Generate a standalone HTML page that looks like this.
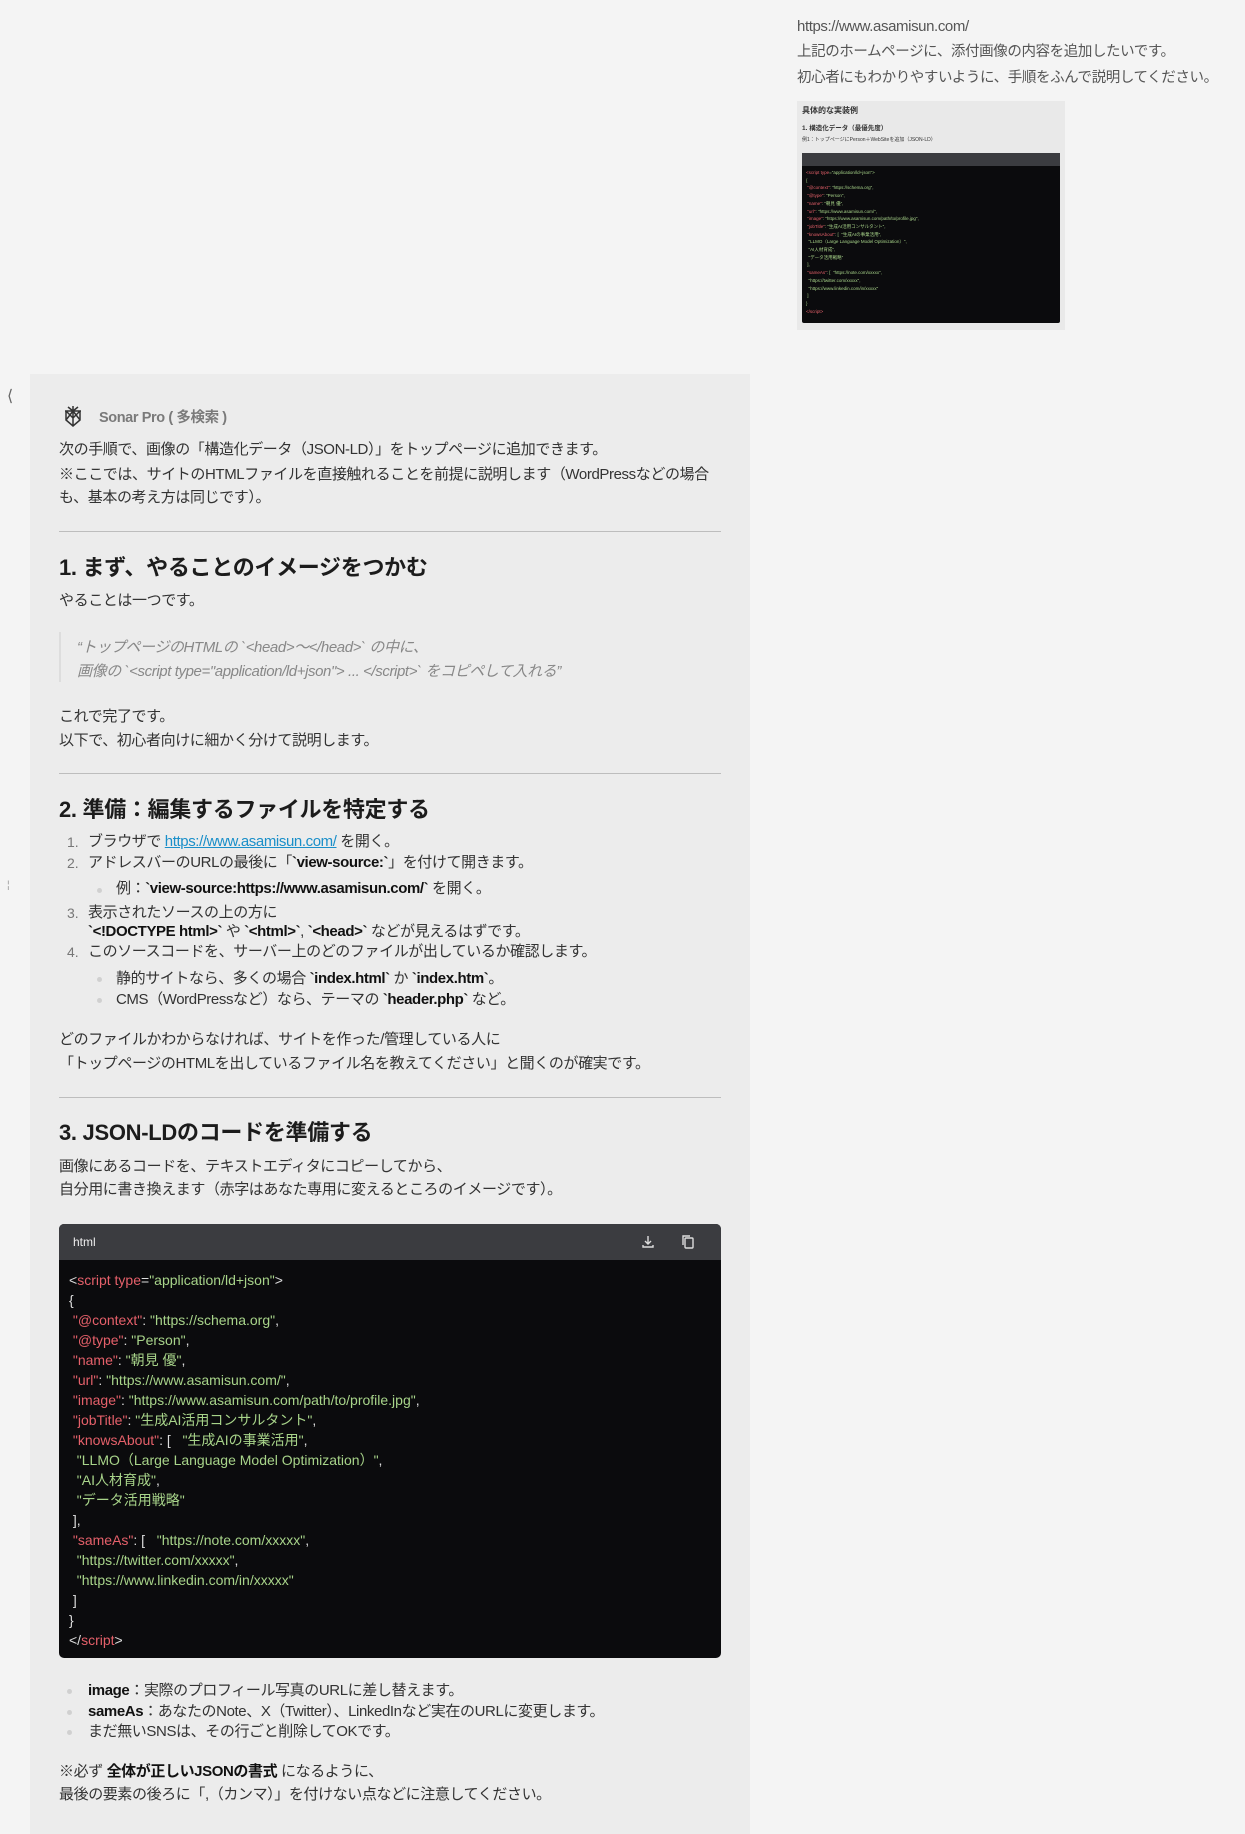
<!DOCTYPE html>
<html><head><meta charset="utf-8"><style>
html,body{margin:0;padding:0;}
body{width:1245px;height:1821px;background:#f4f4f4;position:relative;overflow:hidden;font-family:"Liberation Sans","Noto Sans CJK JP",sans-serif;color:#333;}
.l{position:absolute;white-space:nowrap;font-size:15px;line-height:24px;left:59px;letter-spacing:-0.4px;}
.panel{position:absolute;left:30px;top:374px;width:720px;height:1460px;background:#ececec;}
.hr{position:absolute;left:59px;width:662px;height:1px;background:#bdbdbd;}
h2{position:absolute;margin:0;left:59px;font-size:22px;line-height:30px;font-weight:bold;color:#1c1c1c;white-space:nowrap;letter-spacing:-0.3px;}
b{color:#111;}
.q{color:#888;font-style:italic;left:77px;}
.code{position:absolute;left:59px;top:1224px;width:662px;height:434px;background:#0b0b0d;border-radius:5px;overflow:hidden;}
.ch{height:36px;background:#3b3c40;color:#eee;font-size:12px;line-height:36px;padding-left:14px;position:relative;}
.cl{position:absolute;left:10px;font-size:14px;line-height:20px;white-space:nowrap;color:#ddd;}
.k{color:#e5606a}.s{color:#a8d48a}
.bul{position:absolute;width:5px;height:5px;border-radius:50%;background:#d0d0d0;}
.num{position:absolute;color:#777;font-size:14px;line-height:24px;}
</style></head><body>
<div class="l" style="left:797px;top:15px;color:#555;">https://www.asamisun.com/</div>
<div class="l" style="left:797px;top:40px;color:#555;font-size:14.5px;">上記のホームページに、添付画像の内容を追加したいです。</div>
<div class="l" style="left:797px;top:66px;color:#555;font-size:14.5px;">初心者にもわかりやすいように、手順をふんで説明してください。</div>
<div style="position:absolute;left:797px;top:101px;width:268px;height:229px;background:#e9e9e9;">
 <div style="position:absolute;left:5px;top:4px;font-size:8px;font-weight:bold;color:#333;">具体的な実装例</div>
 <div style="position:absolute;left:5px;top:21px;font-size:6.5px;font-weight:bold;color:#333;">1. 構造化データ（最優先度）</div>
 <div style="position:absolute;left:5px;top:35px;font-size:5px;color:#333;">例1：トップページにPerson＋WebSiteを追加（JSON-LD）</div>
 <div style="position:absolute;left:5px;top:52px;width:258px;height:170px;background:#0b0b0d;border-radius:2px;">
  <div style="height:13px;background:#3b3c40;"></div>
  <div style="padding:3px 4px;font-size:4.5px;line-height:7.7px;color:#a8d48a;white-space:pre;"><span class="k">&lt;script type</span>="application/ld+json"&gt;
{
 <span class="k">"@context"</span>: "https://schema.org",
 <span class="k">"@type"</span>: "Person",
 <span class="k">"name"</span>: "朝見 優",
 <span class="k">"url"</span>: "https://www.asamisun.com/",
 <span class="k">"image"</span>: "https://www.asamisun.com/path/to/profile.jpg",
 <span class="k">"jobTitle"</span>: "生成AI活用コンサルタント",
 <span class="k">"knowsAbout"</span>: [  "生成AIの事業活用",
  "LLMO（Large Language Model Optimization）",
  "AI人材育成",
  "データ活用戦略"
 ],
 <span class="k">"sameAs"</span>: [  "https://note.com/xxxxx",
  "https://twitter.com/xxxxx",
  "https://www.linkedin.com/in/xxxxx"
 ]
}
<span class="k">&lt;/script&gt;</span></div>
 </div>
</div>
<div style="position:absolute;left:7px;top:386px;color:#666;font-size:16px;">⟨</div>
<div style="position:absolute;left:7px;top:880px;color:#999;font-size:10px;">¦</div>
<div class="panel"></div>
<svg style="position:absolute;left:62px;top:405px" width="22" height="22" viewBox="0 0 22 22" fill="none" stroke="#333" stroke-width="1.5"><path d="M3 6h16M11 1v20M4 6l7 7 7-7M4 6v9l7 6 7-6V6M4 15l7-9 7 9M6 2l5 4 5-4"/></svg>
<div class="l" style="left:99px;top:406px;color:#7a7a7a;font-weight:bold;font-size:14.5px;">Sonar Pro ( 多検索 )</div>
<div class="l" style="top:438px;">次の手順で、画像の「構造化データ（JSON-LD）」をトップページに追加できます。</div>
<div class="l" style="top:463px;">※ここでは、サイトのHTMLファイルを直接触れることを前提に説明します（WordPressなどの場合</div>
<div class="l" style="top:486px;">も、基本の考え方は同じです）。</div>
<div class="hr" style="top:531px;"></div>
<h2 style="top:553px;">1. まず、やることのイメージをつかむ</h2>
<div class="l" style="top:589px;">やることは一つです。</div>
<div style="position:absolute;left:59px;top:632px;width:2px;height:50px;background:#ddd;"></div>
<div class="l q" style="top:636px;">“トップページのHTMLの `&lt;head&gt;〜&lt;/head&gt;` の中に、</div>
<div class="l q" style="top:660px;">画像の `&lt;script type="application/ld+json"&gt; ... &lt;/script&gt;` をコピペして入れる”</div>
<div class="l" style="top:705px;">これで完了です。</div>
<div class="l" style="top:729px;">以下で、初心者向けに細かく分けて説明します。</div>
<div class="hr" style="top:773px;"></div>
<h2 style="top:795px;">2. 準備：編集するファイルを特定する</h2>
<div class="num" style="left:67px;top:830px;">1.</div><div class="l" style="left:88px;top:830px;">ブラウザで <span style="color:#1a8fc9;text-decoration:underline;">https://www.asamisun.com/</span> を開く。</div>
<div class="num" style="left:67px;top:851px;">2.</div><div class="l" style="left:88px;top:851px;">アドレスバーのURLの最後に「<b>`view-source:`</b>」を付けて開きます。</div>
<div class="bul" style="left:97px;top:888px;"></div><div class="l" style="left:116px;top:877px;">例：<b>`view-source:https://www.asamisun.com/`</b> を開く。</div>
<div class="num" style="left:67px;top:901px;">3.</div><div class="l" style="left:88px;top:901px;">表示されたソースの上の方に</div>
<div class="l" style="left:88px;top:920px;"><b>`&lt;!DOCTYPE html&gt;`</b> や <b>`&lt;html&gt;`</b>, <b>`&lt;head&gt;`</b> などが見えるはずです。</div>
<div class="num" style="left:67px;top:940px;">4.</div><div class="l" style="left:88px;top:940px;">このソースコードを、サーバー上のどのファイルが出しているか確認します。</div>
<div class="bul" style="left:97px;top:977px;"></div><div class="l" style="left:116px;top:967px;">静的サイトなら、多くの場合 <b>`index.html`</b> か <b>`index.htm`</b>。</div>
<div class="bul" style="left:97px;top:998px;"></div><div class="l" style="left:116px;top:988px;">CMS（WordPressなど）なら、テーマの <b>`header.php`</b> など。</div>
<div class="l" style="top:1028px;">どのファイルかわからなければ、サイトを作った/管理している人に</div>
<div class="l" style="top:1052px;">「トップページのHTMLを出しているファイル名を教えてください」と聞くのが確実です。</div>
<div class="hr" style="top:1097px;"></div>
<h2 style="top:1118px;">3. JSON-LDのコードを準備する</h2>
<div class="l" style="top:1155px;">画像にあるコードを、テキストエディタにコピーしてから、</div>
<div class="l" style="top:1178px;">自分用に書き換えます（赤字はあなた専用に変えるところのイメージです）。</div>
<div class="code">
 <div class="ch">html
  <svg style="position:absolute;left:582px;top:11px" width="14" height="14" viewBox="0 0 14 14" fill="none" stroke="#ddd" stroke-width="1.4"><path d="M7 1v8M4 6l3 3 3-3M2 10v2h10v-2"/></svg>
  <svg style="position:absolute;left:622px;top:10px" width="14" height="15" viewBox="0 0 14 15" fill="none" stroke="#ddd" stroke-width="1.4"><rect x="4" y="4" width="8" height="10" rx="1"/><path d="M2 11V2h7"/></svg>
 </div>
 <div class="cl" style="top:46px;">&lt;<span class="k">script type</span>=<span class="s">"application/ld+json"</span>&gt;</div>
 <div class="cl" style="top:66px;">{</div>
 <div class="cl" style="top:86px;">&nbsp;<span class="k">"@context"</span>: <span class="s">"https://schema.org"</span>,</div>
 <div class="cl" style="top:106px;">&nbsp;<span class="k">"@type"</span>: <span class="s">"Person"</span>,</div>
 <div class="cl" style="top:126px;">&nbsp;<span class="k">"name"</span>: <span class="s">"朝見 優"</span>,</div>
 <div class="cl" style="top:146px;">&nbsp;<span class="k">"url"</span>: <span class="s">"https://www.asamisun.com/"</span>,</div>
 <div class="cl" style="top:166px;">&nbsp;<span class="k">"image"</span>: <span class="s">"https://www.asamisun.com/path/to/profile.jpg"</span>,</div>
 <div class="cl" style="top:186px;">&nbsp;<span class="k">"jobTitle"</span>: <span class="s">"生成AI活用コンサルタント"</span>,</div>
 <div class="cl" style="top:206px;">&nbsp;<span class="k">"knowsAbout"</span>: [&nbsp;&nbsp; <span class="s">"生成AIの事業活用"</span>,</div>
 <div class="cl" style="top:226px;">&nbsp;&nbsp;<span class="s">"LLMO（Large Language Model Optimization）"</span>,</div>
 <div class="cl" style="top:246px;">&nbsp;&nbsp;<span class="s">"AI人材育成"</span>,</div>
 <div class="cl" style="top:266px;">&nbsp;&nbsp;<span class="s">"データ活用戦略"</span></div>
 <div class="cl" style="top:286px;">&nbsp;],</div>
 <div class="cl" style="top:306px;">&nbsp;<span class="k">"sameAs"</span>: [&nbsp;&nbsp; <span class="s">"https://note.com/xxxxx"</span>,</div>
 <div class="cl" style="top:326px;">&nbsp;&nbsp;<span class="s">"https://twitter.com/xxxxx"</span>,</div>
 <div class="cl" style="top:346px;">&nbsp;&nbsp;<span class="s">"https://www.linkedin.com/in/xxxxx"</span></div>
 <div class="cl" style="top:366px;">&nbsp;]</div>
 <div class="cl" style="top:386px;">}</div>
 <div class="cl" style="top:406px;">&lt;/<span class="k">script</span>&gt;</div>
</div>
<div class="bul" style="left:67px;top:1689px;"></div><div class="l" style="left:88px;top:1679px;"><b>image</b>：実際のプロフィール写真のURLに差し替えます。</div>
<div class="bul" style="left:67px;top:1710px;"></div><div class="l" style="left:88px;top:1700px;"><b>sameAs</b>：あなたのNote、X（Twitter）、LinkedInなど実在のURLに変更します。</div>
<div class="bul" style="left:67px;top:1730px;"></div><div class="l" style="left:88px;top:1720px;">まだ無いSNSは、その行ごと削除してOKです。</div>
<div class="l" style="top:1760px;">※必ず <b>全体が正しいJSONの書式</b> になるように、</div>
<div class="l" style="top:1783px;">最後の要素の後ろに「,（カンマ）」を付けない点などに注意してください。</div>
</body></html>
